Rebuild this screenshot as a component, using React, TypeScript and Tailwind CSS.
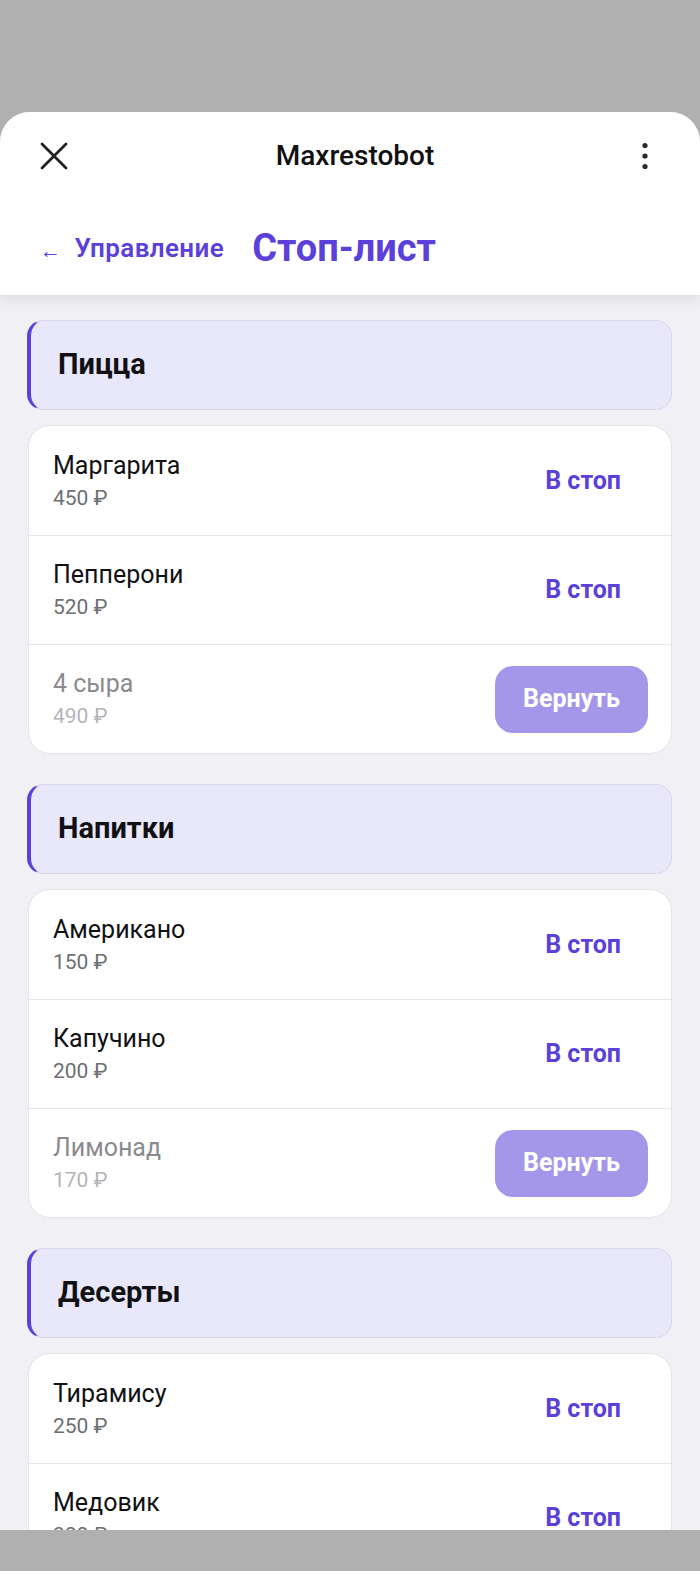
import React from "react";

type Item = { name: string; price: string; stopped?: boolean };
type Section = { title: string; items: Item[] };

const sections: Section[] = [
  {
    title: "Пицца",
    items: [
      { name: "Маргарита", price: "450 ₽" },
      { name: "Пепперони", price: "520 ₽" },
      { name: "4 сыра", price: "490 ₽", stopped: true },
    ],
  },
  {
    title: "Напитки",
    items: [
      { name: "Американо", price: "150 ₽" },
      { name: "Капучино", price: "200 ₽" },
      { name: "Лимонад", price: "170 ₽", stopped: true },
    ],
  },
  {
    title: "Десерты",
    items: [
      { name: "Тирамису", price: "250 ₽" },
      { name: "Медовик", price: "300 ₽" },
    ],
  },
];

function Row({ item, first }: { item: Item; first: boolean }) {
  return (
    <div
      className={
        "flex h-[109px] items-center justify-between pl-[24px] pr-[23px] " +
        (first ? "" : "border-t border-[#e6e6ec]")
      }
    >
      <div className="flex flex-col">
        <span
          className={
            "text-[25px] leading-[30px] " +
            (item.stopped ? "text-[#8a8a8f]" : "text-[#111114]")
          }
        >
          {item.name}
        </span>
        <span
          className={
            "mt-[4px] text-[21px] leading-[26px] " +
            (item.stopped ? "text-[#b4b4b8]" : "text-[#6e6e73]")
          }
        >
          {item.price}
        </span>
      </div>
      {item.stopped ? (
        <button className="flex h-[67px] w-[153px] items-center justify-center rounded-[18px] bg-[#a497e9] text-[25px] font-bold text-white">
          Вернуть
        </button>
      ) : (
        <button className="flex h-[67px] items-center justify-end px-[27px] text-[25px] font-bold text-[#5b41d9]">
          В стоп
        </button>
      )}
    </div>
  );
}

export default function App() {
  return (
    <div
      className="flex h-[1571px] w-[700px] flex-col overflow-hidden bg-[#b0b0b0]"
      style={{ fontFamily: "Roboto, 'Noto Sans', sans-serif" }}
    >
      <div className="h-[112px] shrink-0" />
      <div className="relative flex h-[1418px] shrink-0 flex-col overflow-hidden rounded-t-[30px] bg-[#f0f0f5]">
        <header className="relative z-10 shrink-0 bg-white shadow-[0_4px_14px_rgba(0,0,0,0.10)]">
          <div className="flex h-[88px] items-center justify-between px-[40px]">
            <svg width="30" height="30" viewBox="0 0 30 30" className="-ml-[1px]">
              <path
                d="M3 3 L27 27 M27 3 L3 27"
                stroke="#222"
                strokeWidth="2.8"
                strokeLinecap="round"
              />
            </svg>
            <span className="text-[28px] font-medium text-[#111]">Maxrestobot</span>
            <svg width="8" height="30" viewBox="0 0 8 30" className="mr-[11px]">
              <circle cx="4" cy="4.5" r="2.6" fill="#2a2a2a" />
              <circle cx="4" cy="15" r="2.6" fill="#2a2a2a" />
              <circle cx="4" cy="25.5" r="2.6" fill="#2a2a2a" />
            </svg>
          </div>
          <div className="flex h-[95px] items-center pt-[2px] pl-[40px]">
            <span className="flex items-center text-[26px] font-semibold tracking-[0.4px] text-[#5b41d9]">
              <span className="mr-[13px] mt-[7px] text-[21px] font-medium">←</span>
              Управление
            </span>
            <span className="ml-[28px] text-[38px] font-bold text-[#5b41d9]">Стоп-лист</span>
          </div>
        </header>

        <main className="flex flex-col px-[28px] pt-[25px]">
          {sections.map((s, i) => (
            <section key={s.title} className={i === 0 ? "" : "mt-[30px]"}>
              <div className="-ml-[1px] flex h-[90px] items-center rounded-[16px] border border-l-4 border-[#dad7ef] border-l-[#5b41d9] bg-[#e9e7fa] pl-[27px]">
                <span className="text-[29px] font-bold text-[#111114]">{s.title}</span>
              </div>
              <div className="mt-[15px] overflow-hidden rounded-[22px] border border-[#e3e3ea] bg-white">
                {s.items.map((it, j) => (
                  <Row key={it.name} item={it} first={j === 0} />
                ))}
              </div>
            </section>
          ))}
        </main>
      </div>
    </div>
  );
}
